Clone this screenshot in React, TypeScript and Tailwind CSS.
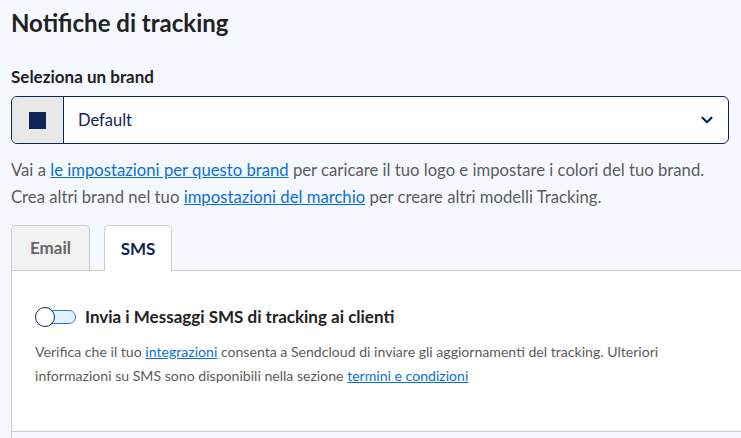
import { ChevronDown } from 'lucide-react';

const font = { fontFamily: 'Lato, "Noto Sans", sans-serif' };

export default function App() {
  return (
    <div className="w-[741px] h-[438px] overflow-hidden bg-[#f5f9ff] pl-[11px]" style={font}>
      <h1 className="pt-[8px] text-[24px] leading-[30px] font-bold text-[#222]">Notifiche di tracking</h1>

      <div className="mt-[28px] text-[17px] leading-[22px] font-bold text-[#222]">Seleziona un brand</div>

      <div className="mt-[8px] flex h-[48px] w-[718px] rounded-[6px] border border-[#0f2557] bg-white overflow-hidden">
        <div className="flex w-[52px] items-center justify-center border-r border-[#0f2557] bg-[#e8e8e8]">
          <div className="h-[17px] w-[17px] bg-[#0f2557]" />
        </div>
        <div className="flex flex-1 items-center justify-between pl-[14px] pr-[12px] text-[16.5px] text-[#0f2557]">
          <span>Default</span>
          <ChevronDown className="h-[18px] w-[18px]" strokeWidth={3} />
        </div>
      </div>

      <div className="mt-[13px] text-[16.7px] leading-[27px] text-[#5c5c5c]">
        <p>
          Vai a <a className="text-[#0b6fd6] underline">le impostazioni per questo brand</a> per caricare il tuo logo e impostare i colori del tuo brand.
        </p>
        <p>
          Crea altri brand nel tuo <a className="text-[#0b6fd6] underline">impostazioni del marchio</a> per creare altri modelli Tracking.
        </p>
      </div>

      <div className="mt-[14px] flex items-end gap-[14px]">
        <div className="flex h-[45px] w-[79px] items-center justify-center rounded-t-[5px] border border-b-0 border-[#cccccc] bg-[#f2f2f2] text-[17px] font-bold text-[#666]">
          Email
        </div>
        <div className="relative z-10 -mb-px flex h-[46px] w-[68px] items-center justify-center rounded-t-[5px] border border-b-0 border-[#cccccc] bg-white text-[17px] font-bold text-[#0f2557]">
          SMS
        </div>
      </div>

      <div className="h-[162px] border-l border-t border-b border-[#cccccc] bg-white pl-[23px] pt-[33px]">
        <div className="flex items-center gap-[9px]">
          <div className="relative h-[20px] w-[41px]">
            <div className="absolute left-[8px] top-[3px] h-[14px] w-[33px] rounded-full border border-[#1a7ee8] bg-[#e6f1ff]" />
            <div className="absolute left-0 top-0 h-[20px] w-[20px] rounded-full border-[1.5px] border-[#0f2557] bg-white" />
          </div>
          <span className="text-[17px] font-bold text-[#222]">Invia i Messaggi SMS di tracking ai clienti</span>
        </div>
        <div className="mt-[10px] text-[14.1px] leading-[24px] text-[#5c5c5c]">
          <p>
            Verifica che il tuo <a className="text-[#0b6fd6] underline">integrazioni</a> consenta a Sendcloud di inviare gli aggiornamenti del tracking. Ulteriori
          </p>
          <p>
            informazioni su SMS sono disponibili nella sezione <a className="text-[#0b6fd6] underline">termini e condizioni</a>
          </p>
        </div>
      </div>
      <div className="h-[20px] border-l border-[#cccccc]" />
    </div>
  );
}
